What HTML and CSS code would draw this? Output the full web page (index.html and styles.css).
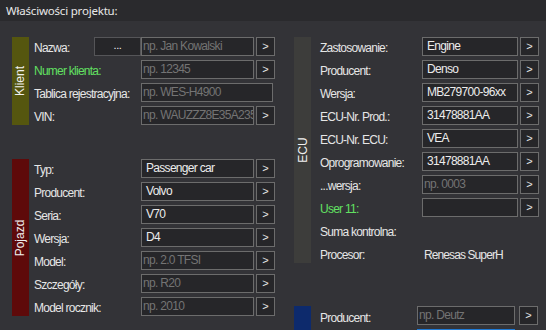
FILE: index.html
```html
<!DOCTYPE html>
<html lang="pl">
<head>
<meta charset="utf-8">
<link rel="stylesheet" href="styles.css">
</head>
<body>
<div class="header">Właściwości projektu:</div>
<div class="main">
  <div class="col col-left">
    <div class="group">
      <div class="bar bar-klient"><span>Klient</span></div>
      <div class="rows">
        <div class="row"><span class="label label-short">Nazwa:</span><span class="dots">...</span><span class="input ph">np. Jan Kowalski</span><span class="arrow">&gt;</span></div>
        <div class="row"><span class="label green">Numer klienta:</span><span class="input ph">np. 12345</span><span class="arrow">&gt;</span></div>
        <div class="row"><span class="label">Tablica rejestracyjna:</span><span class="input input-wide ph">np. WES-H4900</span></div>
        <div class="row"><span class="label">VIN:</span><span class="input ph">np. WAUZZZ8E35A235</span><span class="arrow">&gt;</span></div>
      </div>
    </div>
    <div class="group">
      <div class="bar bar-pojazd"><span>Pojazd</span></div>
      <div class="rows">
        <div class="row"><span class="label">Typ:</span><span class="input val">Passenger car</span><span class="arrow">&gt;</span></div>
        <div class="row"><span class="label">Producent:</span><span class="input val">Volvo</span><span class="arrow">&gt;</span></div>
        <div class="row"><span class="label">Seria:</span><span class="input val">V70</span><span class="arrow">&gt;</span></div>
        <div class="row"><span class="label">Wersja:</span><span class="input val">D4</span><span class="arrow">&gt;</span></div>
        <div class="row"><span class="label">Model:</span><span class="input ph">np. 2.0 TFSI</span><span class="arrow">&gt;</span></div>
        <div class="row"><span class="label">Szczegóły:</span><span class="input ph">np. R20</span><span class="arrow">&gt;</span></div>
        <div class="row"><span class="label">Model rocznik:</span><span class="input ph">np. 2010</span><span class="arrow">&gt;</span></div>
      </div>
    </div>
  </div>
  <div class="col col-right">
    <div class="group group-r">
      <div class="bar bar-ecu"><span>ECU</span></div>
      <div class="rows">
        <div class="row"><span class="label">Zastosowanie:</span><span class="input val">Engine</span><span class="arrow">&gt;</span></div>
        <div class="row"><span class="label">Producent:</span><span class="input val">Denso</span><span class="arrow">&gt;</span></div>
        <div class="row"><span class="label">Wersja:</span><span class="input val">MB279700-96xx</span><span class="arrow">&gt;</span></div>
        <div class="row"><span class="label">ECU-Nr. Prod.:</span><span class="input val">31478881AA</span><span class="arrow">&gt;</span></div>
        <div class="row"><span class="label">ECU-Nr. ECU:</span><span class="input val">VEA</span><span class="arrow">&gt;</span></div>
        <div class="row"><span class="label">Oprogramowanie:</span><span class="input val">31478881AA</span><span class="arrow">&gt;</span></div>
        <div class="row"><span class="label">...wersja:</span><span class="input ph">np. 0003</span><span class="arrow">&gt;</span></div>
        <div class="row"><span class="label green">User 11:</span><span class="input val"></span><span class="arrow">&gt;</span></div>
        <div class="row"><span class="label">Suma kontrolna:</span></div>
        <div class="row"><span class="label">Procesor:</span><span class="plain">Renesas SuperH</span></div>
      </div>
    </div>
    <div class="group group-r group-blue">
      <div class="bar bar-blue"></div>
      <div class="rows">
        <div class="row"><span class="label">Producent:</span><span class="input ph">np. Deutz</span><span class="arrow">&gt;</span></div>
        <div class="row"><span class="label"></span><span class="input focus"></span></div>
      </div>
    </div>
  </div>
</div>
</body>
</html>
```
FILE: styles.css
```css
html, body {
  margin: 0;
  padding: 0;
  overflow: hidden;
}
body {
  width: 546px;
  height: 330px;
  background: #333337;
  color: #e6e6e6;
  font-family: "Liberation Sans", Arial, sans-serif;
  font-size: 11px;
  letter-spacing: -0.35px;
}
.header {
  height: 21px;
  background: #2a2a2d;
  font-family: "Noto Sans", "Open Sans", sans-serif;
  font-size: 11.5px;
  letter-spacing: -0.2px;
  line-height: 21px;
  padding-left: 6px;
  color: #e8e8e8;
}
.main {
  display: flex;
  height: 309px;
  overflow: hidden;
  padding: 16px 0 0 12px;
  box-sizing: border-box;
}
.col {
  display: flex;
  flex-direction: column;
}
.col-left {
  width: 282px;
  gap: 34px;
}
.col-right {
  gap: 43px;
}
.group {
  display: flex;
  flex: none;
}
.bar {
  width: 17px;
  flex: none;
  display: flex;
  align-items: center;
  justify-content: center;
  margin-right: 5px;
}
.group-r .bar {
  margin-right: 9px;
}
.bar span {
  transform: rotate(-90deg);
  color: #f0f0f0;
  white-space: nowrap;
  font-size: 12px;
  letter-spacing: 0;
}
.bar-klient { background: #55560f; }
.bar-pojazd { background: #5e0a0a; }
.bar-ecu { background: #3d3d3b; }
.bar-blue { background: #0d2a6c; }
.rows {
  display: flex;
  flex-direction: column;
  gap: 4px;
}
.row {
  display: flex;
  align-items: center;
  height: 19px;
}
.label {
  width: 107px;
  flex: none;
  white-space: nowrap;
  padding-top: 3px;
  font-size: 12px;
  letter-spacing: -0.75px;
}
.group-r .label {
  width: 102px;
}
.group-blue .label {
  width: 97px;
  padding-top: 4px;
}
.label-short {
  width: 60px;
}
.green {
  color: #62e062;
}
.dots {
  box-sizing: border-box;
  width: 47px;
  height: 19px;
  background: #262629;
  border: 1px solid #555558;
  text-align: center;
  line-height: 15px;
  color: #f0f0f0;
}
.input {
  box-sizing: border-box;
  width: 113px;
  height: 19px;
  background: #262629;
  border: 1px solid #6c6c6c;
  line-height: 17px;
  padding-left: 1px;
  white-space: nowrap;
  overflow: hidden;
  flex: none;
  font-size: 12px;
  letter-spacing: -0.7px;
}
.input-wide {
  width: 132px;
}
.group-r .input {
  width: 96px;
}
.group-blue .input {
  width: 98px;
}
.val {
  padding-left: 4px;
  color: #ececec;
}
.ph {
  color: #747474;
}
.focus {
  border-color: #1e7ad6;
}
.arrow {
  box-sizing: border-box;
  width: 19px;
  height: 19px;
  margin-left: 2px;
  background: #262629;
  border: 1px solid #6c6c6c;
  text-align: center;
  line-height: 17px;
  color: #e8e8e8;
  flex: none;
  letter-spacing: 0;
}
.group-blue .arrow {
  margin-left: 4px;
}
.plain {
  padding-left: 2px;
  padding-top: 3px;
  color: #e6e6e6;
  font-size: 12px;
  letter-spacing: -0.9px;
}
```
